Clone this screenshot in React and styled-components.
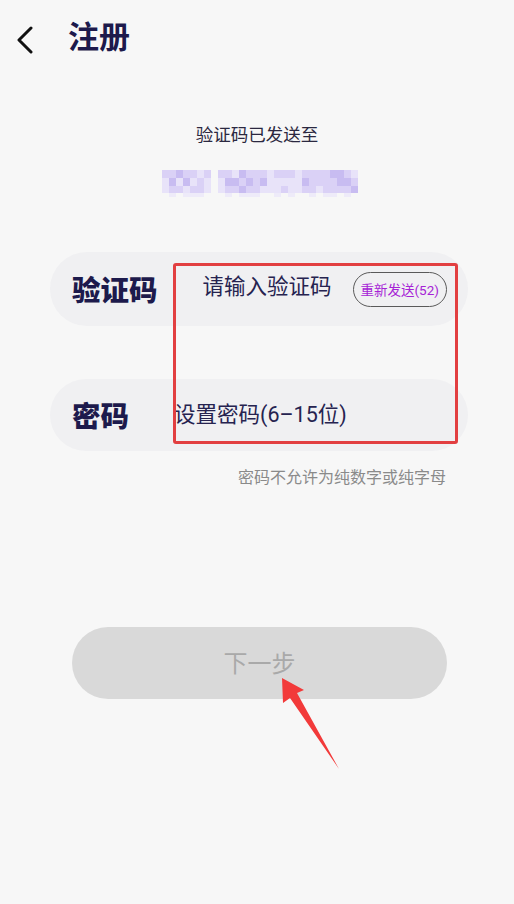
import React from "react";
import styled, { createGlobalStyle } from "styled-components";

const Global = createGlobalStyle`
  html, body { margin: 0; padding: 0; background: #f7f7f7; }
  body { font-family: Roboto, "Noto Sans CJK SC", sans-serif; }
  * { box-sizing: border-box; }
`;

const Page = styled.div`
  position: relative;
  width: 514px;
  min-height: 904px;
  background: #f7f7f7;
  display: flex;
  flex-direction: column;
  overflow: hidden;
`;

const Header = styled.header`
  height: 76px;
  display: flex;
  align-items: center;
  padding-left: 14px;
`;

const BackButton = styled.button`
  border: 0;
  background: none;
  padding: 0;
  width: 22px;
  height: 30px;
  display: flex;
  align-items: center;
  justify-content: center;
  margin-top: 4px;
`;

const Title = styled.h1`
  margin: 0 0 0 32px;
  font-size: 31px;
  font-weight: 700;
  color: #1d1a4c;
  line-height: 40px;
`;

const Subtitle = styled.p`
  margin: 47px 0 0;
  text-align: center;
  font-size: 17.5px;
  line-height: 24px;
  color: #2b2840;
`;

const Mosaic = styled.svg`
  display: block;
  margin: 23px 0 0 162px;
`;

const Form = styled.div`
  margin: 55px 46px 0 50px;
  display: flex;
  flex-direction: column;
  gap: 53px;
`;

const Field = styled.div`
  height: ${(p) => p.$h}px;
  border-radius: 37px;
  background: #f0f0f2;
  display: flex;
  align-items: center;
  padding: 0 21px 0 22px;
`;

const Label = styled.span`
  font-size: 28.5px;
  font-weight: 900;
  color: #1d1a4c;
  margin-right: 45px;
  line-height: 1;
  font-family: "Noto Sans CJK SC", sans-serif;
`;

const Placeholder = styled.span`
  flex: 1;
  font-size: 21.5px;
  color: #262350;
  line-height: 1;
  margin-top: ${(p) => p.$dy || 0}px;
`;

const ResendButton = styled.button`
  height: 35px;
  padding: 0 7px;
  border-radius: 18px;
  border: 1px solid #5a5a5a;
  background: transparent;
  color: #a623d6;
  font-family: Roboto, "Noto Sans CJK SC", sans-serif;
  font-size: 13.5px;
  display: flex;
  align-items: center;
  white-space: nowrap;
`;

const Hint = styled.p`
  margin: 16px 68px 0 0;
  text-align: right;
  font-size: 16px;
  line-height: 22px;
  color: #8a8a8a;
`;

const NextButton = styled.button`
  margin: 138px 67px 0 72px;
  height: 72px;
  border-radius: 36px;
  border: 0;
  background: #d9d9d9;
  color: #a9a9a9;
  font-family: "Noto Sans CJK SC", sans-serif;
  font-size: 24px;
  display: flex;
  align-items: center;
  justify-content: center;
  padding-bottom: 4px;
`;

const Highlight = styled.div`
  position: absolute;
  left: 173px;
  top: 263px;
  width: 285px;
  height: 181px;
  border: 3px solid #e23f41;
  border-radius: 3px;
  pointer-events: none;
`;

const Arrow = styled.svg`
  position: absolute;
  left: 270px;
  top: 670px;
  pointer-events: none;
`;

const rows = [
  "2232212" + "0" + "22132221222" + "122223321",
  "1313121" + "0" + "13323231111" + "132222332",
  "1221221" + "0" + "12232211121" + "122122223",
  "0101110" + "0" + "01011100101" + "001011010",
];
const rowH = [8, 8, 7, 4];
const colors = { 1: "#e8e3f9", 2: "#dad1f6", 3: "#c8bcf1" };

function PhoneMosaic() {
  let y = 0;
  const rects = [];
  rows.forEach((r, ri) => {
    r.split("").forEach((c, ci) => {
      if (c !== "0") {
        rects.push(
          <rect
            key={ri + "-" + ci}
            x={ci * 7}
            y={y}
            width={7}
            height={rowH[ri]}
            fill={ri === 3 ? "#eeebf9" : colors[c]}
          />
        );
      }
    });
    y += rowH[ri];
  });
  return (
    <Mosaic width="196" height="27" viewBox="0 0 196 27">
      {rects}
    </Mosaic>
  );
}

export default function App() {
  return (
    <>
      <Global />
      <Page>
        <Header>
          <BackButton aria-label="返回">
            <svg width="20" height="28" viewBox="0 0 20 28">
              <path d="M16 2 L4 14 L16 26" fill="none" stroke="#111" strokeWidth="3" strokeLinecap="round" strokeLinejoin="round" />
            </svg>
          </BackButton>
          <Title>注册</Title>
        </Header>
        <Subtitle>验证码已发送至</Subtitle>
        <PhoneMosaic />
        <Form>
          <Field $h={74}>
            <Label>验证码</Label>
            <Placeholder $dy={-4}>请输入验证码</Placeholder>
            <ResendButton>重新发送(52)</ResendButton>
          </Field>
          <Field $h={72}>
            <Label>密码</Label>
            <Placeholder>设置密码(6–15位)</Placeholder>
          </Field>
        </Form>
        <Hint>密码不允许为纯数字或纯字母</Hint>
        <NextButton>下一步</NextButton>
        <Highlight />
        <Arrow width="80" height="110" viewBox="270 670 80 110">
          <polygon points="282,678 304,690 297,693 339,769 290,698 283,703" fill="#f23a3a" />
        </Arrow>
      </Page>
    </>
  );
}
